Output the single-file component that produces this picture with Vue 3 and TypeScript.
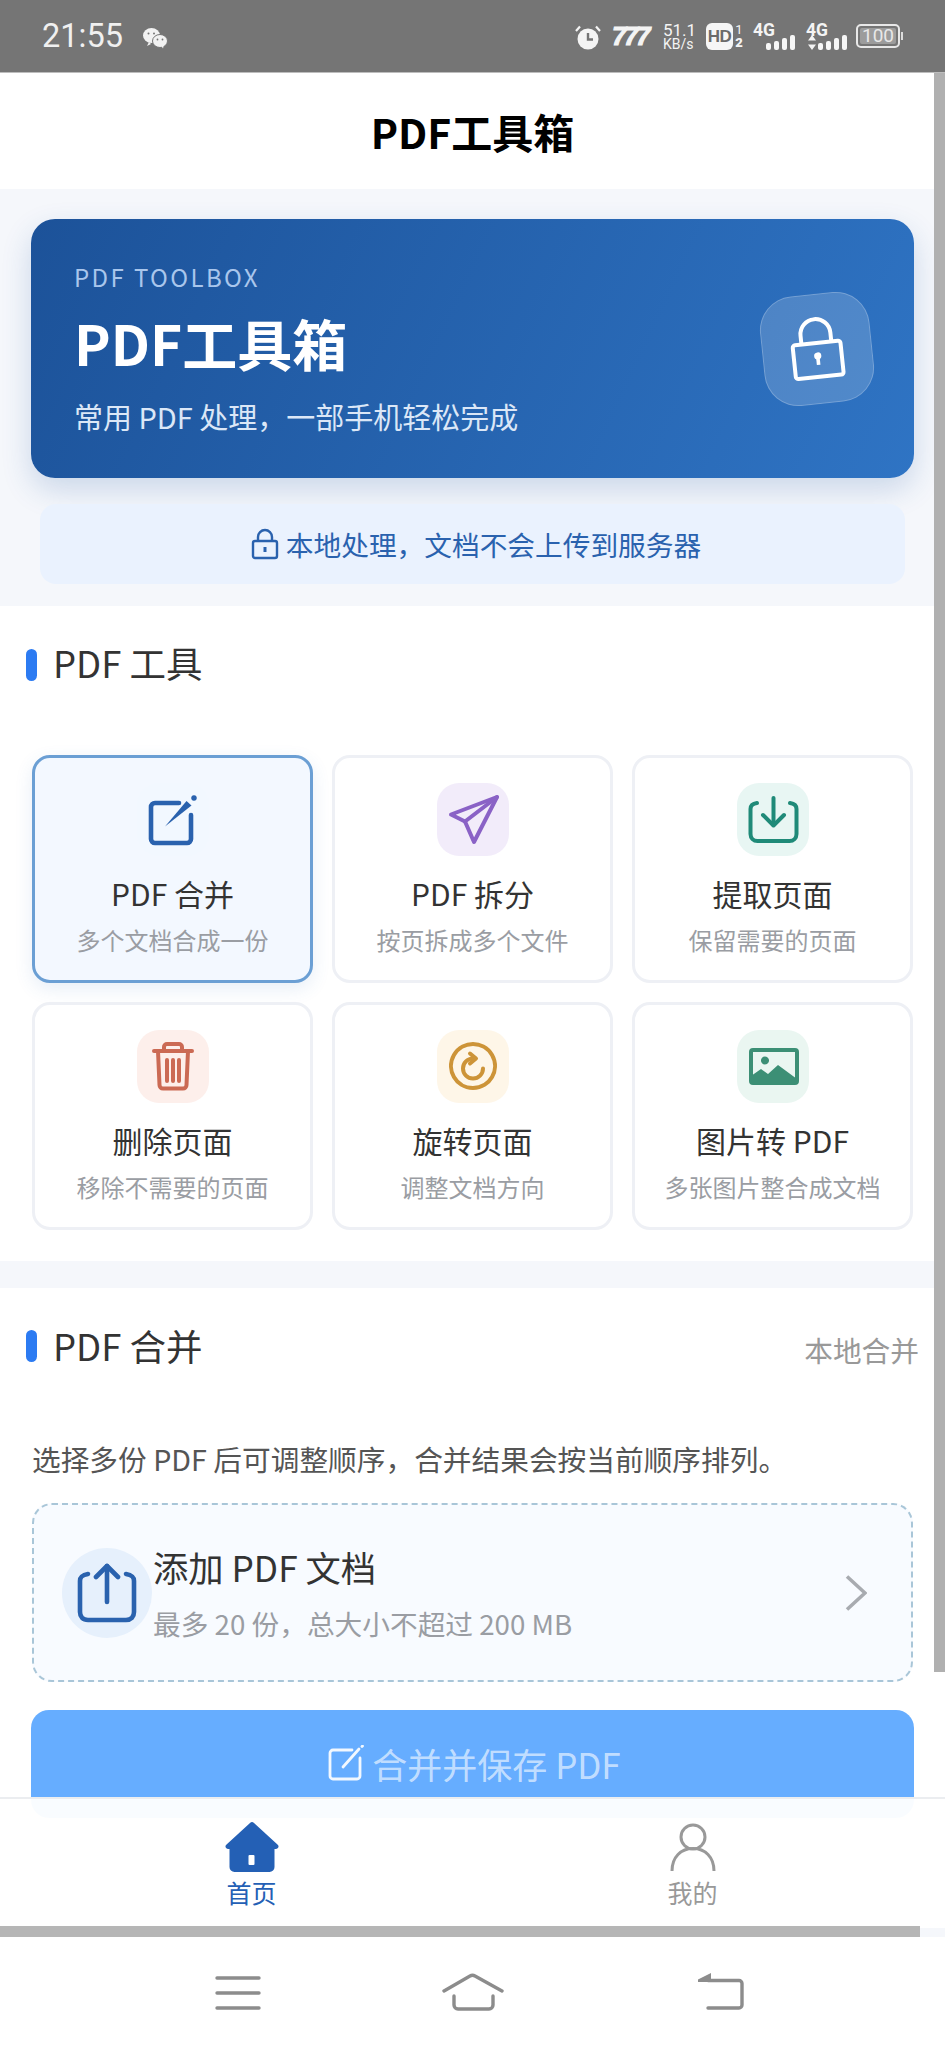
<script setup lang="ts">
interface Shape { d: string; fill?: boolean; width?: number }
interface Tool { title: string; sub: string; bg: string; color: string; active?: boolean; shapes: Shape[] }

const tools: Tool[] = [
  { title: 'PDF 合并', sub: '多个文档合成一份', bg: '#f2f8ff', color: '#2a62ae', active: true, shapes: [
    { d: 'M42 20H18a4 4 0 0 0-4 4v32a4 4 0 0 0 4 4h32a4 4 0 0 0 4-4V32', width: 4.6 },
    { d: 'M28 43.500 49.500 18l5 4.500z', fill: true },
    { d: 'M57 12.200a2.800 2.800 0 1 1-.01 0z', fill: true },
  ] },
  { title: 'PDF 拆分', sub: '按页拆成多个文件', bg: '#f2ecfa', color: '#8a62c6', shapes: [
    { d: 'M60 14 14 31.500l14 7L37 59z' },
    { d: 'M60 14 28 38.500' },
  ] },
  { title: '提取页面', sub: '保留需要的页面', bg: '#e8f6f3', color: '#1f8a78', shapes: [
    { d: 'M20 20c-4 .5-6.500 2.500-6.500 6v25c0 4 3 7 7 7h32c4 0 7-3 7-7V26c0-3.500-2.500-5.500-6.500-6' },
    { d: 'M36.500 15v27' },
    { d: 'M26 32l10.500 10.500L47 32' },
  ] },
  { title: '删除页面', sub: '移除不需要的页面', bg: '#fdefeb', color: '#cb6a54', shapes: [
    { d: 'M17 21h38' },
    { d: 'M27 20v-3a3 3 0 0 1 3-3h12a3 3 0 0 1 3 3v3' },
    { d: 'M21 21l1.500 34a3.500 3.500 0 0 0 3.500 3.500h20a3.500 3.500 0 0 0 3.500-3.500L51 21' },
    { d: 'M30 30v21M36 30v21M42 30v21' },
  ] },
  { title: '旋转页面', sub: '调整文档方向', bg: '#fef6e8', color: '#cd9438', shapes: [
    { d: 'M36 14a22 22 0 1 0 .01 0z' },
    { d: 'M36 28.500a10 10 0 1 0 10 10' },
    { d: 'M33 23.500l6 5-6 5' },
  ] },
  { title: '图片转 PDF', sub: '多张图片整合成文档', bg: '#eaf6f1', color: '#3c8f75', shapes: [
    { d: 'M16 20h42a2 2 0 0 1 2 2v29a2 2 0 0 1-2 2H16a2 2 0 0 1-2-2V22a2 2 0 0 1 2-2z' },
    { d: 'M14 46l10-7 7 5 10-9 19 14v3a2 2 0 0 1-2 2H16a2 2 0 0 1-2-2z', fill: true },
    { d: 'M28 26.500a4 4 0 1 1-.01 0z', fill: true },
  ] },
]
</script>

<template>
  <div class="shell">
    <div class="status">
      <span class="time">21:55</span>
      <svg class="wechat" viewBox="0 0 26 22" width="26" height="22">
        <ellipse cx="9.500" cy="8.500" rx="8.500" ry="7.500" fill="#f2f2f2" />
        <ellipse cx="18" cy="14" rx="7.500" ry="6.500" fill="#f2f2f2" stroke="#757575" stroke-width="1" />
        <path d="M5 19l2-4 2 2zM21 21.500l-2-3 3-1z" fill="#f2f2f2" />
        <circle cx="6.500" cy="6.500" r="1" fill="#757575" /><circle cx="12" cy="6.500" r="1" fill="#757575" />
        <circle cx="15.500" cy="12.500" r=".9" fill="#757575" /><circle cx="20.500" cy="12.500" r=".9" fill="#757575" />
      </svg>
      <span class="status-fill"></span>
      <svg class="alarm" viewBox="0 0 28 26" width="28" height="26">
        <circle cx="14" cy="15" r="10.500" fill="#f4f4f4" />
        <path d="M14 9v6.500h5" fill="none" stroke="#757575" stroke-width="2.400" />
        <path d="M2 7l4-4.500M26 7l-4-4.500" stroke="#f4f4f4" stroke-width="2.200" fill="none" />
      </svg>
      <span class="sevens">777</span>
      <span class="speed"><b>51.1</b><b>KB/s</b></span>
      <span class="hd">HD</span>
      <span class="sims"><b>1</b><b>2</b></span>
      <span class="signal">
        <span class="g4">4G</span>
        <span class="bars"><i class="b1"></i><i class="b2"></i><i class="b3"></i><i class="b4"></i></span>
      </span>
      <span class="signal second">
        <span class="g4">4G</span>
        <span class="bars">
          <svg class="updown" viewBox="0 0 8 15" width="8" height="15"><path d="M4 0l4 5.500H0zM4 15l4-5.500H0z" fill="#f4f4f4" /></svg>
          <i class="b1"></i><i class="b2"></i><i class="b3"></i><i class="b4"></i>
        </span>
      </span>
      <span class="battery"><span class="battery-fill">100</span></span>
      <span class="battery-cap"></span>
    </div>

    <div class="stage">
      <header class="top">PDF工具箱</header>

      <section class="intro">
        <div class="hero">
          <div class="hero-text">
            <div class="eyebrow">PDF TOOLBOX</div>
            <div class="hero-title">PDF工具箱</div>
            <div class="hero-sub">常用 PDF 处理，一部手机轻松完成</div>
          </div>
          <div class="hero-badge">
            <svg viewBox="0 0 60 64" width="60" height="64" fill="none" stroke="#fff" stroke-width="4">
              <rect x="6" y="26" width="48" height="34" rx="2.500" />
              <path d="M15 26V17a15 15 0 0 1 30 0v9" />
              <circle cx="30" cy="39" r="3.600" fill="#fff" stroke="none" />
              <path d="M30 41v7" stroke-width="3.600" />
            </svg>
          </div>
        </div>
        <div class="notice">
          <svg viewBox="0 0 28 32" width="28" height="32" fill="none" stroke="#2a62ae" stroke-width="2.400">
            <rect x="2" y="13" width="24" height="17" rx="2" />
            <path d="M7 13V9a7 7 0 0 1 14 0v4" />
            <path d="M14 19v5" stroke-width="3" />
          </svg>
          <span>本地处理，文档不会上传到服务器</span>
        </div>
      </section>

      <section class="panel tools">
        <div class="heading"><i class="mark"></i><h2>PDF 工具</h2></div>
        <div class="grid">
          <div v-for="t in tools" :key="t.title" class="card" :class="{ active: t.active }">
            <div class="tool-icon" :style="{ background: t.bg }">
              <svg viewBox="0 0 72 72" width="72" height="72" fill="none" :stroke="t.color" stroke-width="4" stroke-linecap="round" stroke-linejoin="round">
                <path v-for="s in t.shapes" :key="s.d" :d="s.d" :fill="s.fill ? t.color : 'none'" :stroke="s.fill ? 'none' : t.color" :stroke-width="s.width ?? 4" />
              </svg>
            </div>
            <div class="card-title">{{ t.title }}</div>
            <div class="card-sub">{{ t.sub }}</div>
          </div>
        </div>
      </section>

      <section class="panel merge">
        <div class="heading spread">
          <i class="mark"></i><h2>PDF 合并</h2>
          <span class="tag">本地合并</span>
        </div>
        <p class="desc">选择多份 PDF 后可调整顺序，合并结果会按当前顺序排列。</p>
        <div class="drop">
          <div class="drop-icon">
            <svg viewBox="0 0 60 60" width="60" height="60" fill="none" stroke="#2a62ae" stroke-width="4.600" stroke-linecap="round" stroke-linejoin="round">
              <path d="M11 11C5 12 3 14 3 18v31c0 5 3 8 8 8h38c5 0 8-3 8-8V18c0-4-2-6-8-7" />
              <path d="M30 39V3" />
              <path d="M19 14 30 3l11 11" />
            </svg>
          </div>
          <div class="drop-text">
            <div class="drop-title">添加 PDF 文档</div>
            <div class="drop-sub">最多 20 份，总大小不超过 200 MB</div>
          </div>
          <svg class="chev" viewBox="0 0 22 36" width="22" height="36" fill="none" stroke="#a8abb0" stroke-width="3.600">
            <path d="M2 1.500 20 18 2 34.500" />
          </svg>
        </div>
        <div class="submit">
          <svg viewBox="0 0 36 36" width="36" height="36" fill="none" stroke="#f2f8ff" stroke-width="2.800" stroke-linecap="round" stroke-linejoin="round">
            <path d="M24 5H5a3 3 0 0 0-3 3v23a3 3 0 0 0 3 3h24a3 3 0 0 0 3-3V13" />
            <path d="M15 22 31 4" />
            <path d="M34 1.500l.5-.5" />
          </svg>
          <span>合并并保存 PDF</span>
        </div>
      </section>

      <nav class="tabs">
        <div class="tab on">
          <svg viewBox="0 0 56 50" width="56" height="50">
            <path d="M26 1a3 3 0 0 1 4 0l24 22a2.500 2.500 0 0 1-2 4h-1.500v18a5 5 0 0 1-5 5h-35a5 5 0 0 1-5-5V27H4a2.500 2.500 0 0 1-2-4z" fill="#2460b5" />
            <rect x="24.500" y="33" width="6" height="10" rx="1" fill="#fff" />
          </svg>
          <span>首页</span>
        </div>
        <div class="tab">
          <svg viewBox="0 0 50 50" width="50" height="50" fill="none" stroke="#999" stroke-width="3">
            <circle cx="25" cy="15" r="12" />
            <path d="M4 49C4 35 13 26.500 25 26.500S46 35 46 49" />
          </svg>
          <span>我的</span>
        </div>
      </nav>

      <div class="scroll-y"></div>
      <div class="scroll-x"></div>
    </div>

    <div class="system">
      <svg viewBox="0 0 46 36" width="46" height="36" fill="none" stroke="#8c8c8c" stroke-width="3.400" stroke-linecap="round">
        <path d="M2 3h42M2 18h42M2 33h42" />
      </svg>
      <svg class="sys-home" viewBox="0 0 62 38" width="62" height="38" fill="none" stroke="#8c8c8c" stroke-width="3.400" stroke-linejoin="round" stroke-linecap="round">
        <path d="M2 18 28 3a5 5 0 0 1 5 0l27 15" />
        <path d="M12 23v9a4 4 0 0 0 4 4h31a4 4 0 0 0 4-4V23" />
      </svg>
      <svg class="sys-back" viewBox="0 0 46 38" width="46" height="38" fill="none" stroke="#8c8c8c" stroke-width="3.400" stroke-linecap="round">
        <path d="M10 7.500h31a3 3 0 0 1 3 3V32a3 3 0 0 1-3 3H10" />
        <path d="M0 6.500 13 0v9H0z" fill="#8c8c8c" stroke="none" />
      </svg>
    </div>
  </div>
</template>

<style scoped>
.shell {
  width: 945px;
  height: 2048px;
  display: flex;
  flex-direction: column;
  overflow: hidden;
  background: #fff;
  font-family: "Noto Sans CJK SC", "Noto Sans", sans-serif;
  color: #333;
}
.status {
  height: 73px;
  box-sizing: border-box;
  flex: none;
  background: #757575;
  border-bottom: 1px solid #bdbdbd;
  display: flex;
  align-items: center;
  color: #f4f4f4;
  padding: 0 42px 0 42px;
}
.time { font: 400 32.500px/1 Roboto, sans-serif; color: #f0f0f0; }
.wechat { margin-left: 19px; margin-top: 3px; }
.status-fill { flex: 1; }
.alarm { flex: none; margin-top: 2px; }
.sevens {
  flex: none;
  margin-left: 10px;
  width: 38px;
  font: italic 700 26px/30px "Liberation Sans", sans-serif;
  letter-spacing: -2.500px;
  -webkit-text-stroke: 1px #f4f4f4;
  white-space: nowrap;
}
.speed { flex: none; display: flex; flex-direction: column; margin-left: 13px; width: 30px; font: 400 14px/14px Roboto, sans-serif; margin-top: 3px; }
.speed b { font-weight: 400; white-space: nowrap; }
.speed b:first-child { font-size: 17px; line-height: 13px; }
.hd {
  flex: none;
  margin-left: 13px;
  width: 27px;
  height: 27px;
  border-radius: 6px;
  background: #f6f6f6;
  color: #6b6b6b;
  font: 700 17px/27px "Liberation Sans", sans-serif;
  letter-spacing: -.5px;
  text-align: center;
}
.sims { flex: none; display: flex; flex-direction: column; margin-left: 2px; width: 8px; font: 700 13px/13px Roboto, sans-serif; text-align: center; }
.sims b:first-child { font-weight: 400; }
.signal { flex: none; margin-left: 10px; width: 42px; height: 27px; position: relative; }
.signal.second { margin-left: 11px; width: 41px; }
.g4 { position: absolute; left: 0; top: 0; font: 700 17.500px/15px Roboto, sans-serif; }
.bars { position: absolute; right: 0; bottom: 0; display: flex; align-items: flex-end; gap: 3px; }
.bars i { width: 5px; background: #f6f6f6; border-radius: 2px; display: block; }
.b1 { height: 7px; }
.b2 { height: 9px; }
.b3 { height: 12px; }
.b4 { height: 15px; }
.updown { margin-right: -1px; }
.battery {
  flex: none;
  margin-left: 9px;
  width: 44px;
  height: 24px;
  border: 2px solid #e8e8e8;
  border-radius: 5px;
  padding: 2px;
  box-sizing: border-box;
  display: block;
}
.battery-fill {
  display: block;
  height: 16px;
  background: #9c9c9c;
  border-radius: 2px;
  font: 400 19px/16px Roboto, sans-serif;
  text-align: center;
  color: #e8e8e8;
}
.battery-cap { flex: none; width: 2px; height: 8px; margin-left: 1px; background: #dcdcdc; }
.stage { height: 1864px; flex: none; position: relative; overflow: hidden; background: #f5f7fb; }
.top {
  height: 116px;
  display: flex;
  align-items: center;
  justify-content: center;
  font-size: 41px;
  font-weight: 700;
  color: #000;
  background: #fff;
}
.intro { background: #f5f7fb; padding: 30px 31px 22px; }
.hero {
  height: 259px;
  box-sizing: border-box;
  border-radius: 24px;
  background: linear-gradient(115deg, #1c5299 0%, #2f74c4 100%);
  box-shadow: 0 12px 30px rgba(34, 90, 165, .2);
  padding: 42px 42px 0 43px;
  display: flex;
  align-items: flex-start;
  justify-content: space-between;
  color: #fff;
}
.eyebrow { font-size: 24px; line-height: 32px; letter-spacing: 2.400px; color: #a9c6ec; }
.hero-title { font-size: 55px; font-weight: 700; line-height: 68px; margin-top: 15px; }
.hero-sub { font-size: 29px; line-height: 40px; margin-top: 20px; color: #dbe7f7; white-space: nowrap; }
.hero-badge {
  width: 110px;
  height: 110px;
  margin-top: 33px;
  border-radius: 34px;
  border: 1px solid rgba(255, 255, 255, .22);
  background: rgba(255, 255, 255, .17);
  transform: rotate(-6deg);
  display: flex;
  align-items: center;
  justify-content: center;
  box-sizing: border-box;
}
.notice {
  margin: 26px 9px 0;
  height: 80px;
  padding-left: 7px;
  background: #eaf2fe;
  border-radius: 16px;
  display: flex;
  align-items: center;
  justify-content: center;
  gap: 7px;
  font-size: 27.700px;
  color: #2a62ae;
}
.panel { background: #fff; padding: 0 31px; }
.tools { height: 655px; box-sizing: border-box; }
.heading {
  display: flex;
  align-items: center;
  height: 50px;
  margin-left: -5px;
}
.tools .heading { padding-top: 34px; }
.merge .heading { padding-top: 33px; }
.mark { width: 11px; height: 32px; background: #2c7bf2; border-radius: 6px; display: block; }
h2 { margin: -4px 0 0 16px; font-size: 36.500px; font-weight: 400; color: #333; line-height: 50px; }
.merge h2 { margin-top: 0; }
.spread .tag { margin-left: auto; margin-right: -5px; font-size: 28.700px; color: #999; padding-top: 6px; }
.grid {
  margin: 65px 1px 0;
  display: grid;
  grid-template-columns: repeat(3, 281px);
  column-gap: 19px;
  row-gap: 19px;
}
.card {
  height: 228px;
  box-sizing: border-box;
  border: 3px solid #eef0f5;
  border-radius: 18px;
  padding-top: 25px;
  background: #fff;
  display: flex;
  flex-direction: column;
  align-items: center;
}
.card.active {
  background: #f3f8ff;
  border-color: #6b9fd4;
  box-shadow: 0 6px 18px rgba(60, 115, 190, .12);
}
.tool-icon { width: 72px; height: 73px; border-radius: 22px; flex: none; }
.card-title { margin-top: 15px; font-size: 30px; line-height: 44px; color: #333; white-space: nowrap; }
.card-sub { margin-top: 8px; font-size: 24px; line-height: 34px; color: #9a9da3; white-space: nowrap; }
.merge { height: 640px; box-sizing: border-box; margin-top: 27px; }
.desc { margin: 68px 1px 0; font-size: 28.700px; line-height: 40px; color: #555; white-space: nowrap; }
.drop {
  margin: 24px 1px 0;
  height: 179px;
  box-sizing: border-box;
  border: 2px dashed #a9c6d8;
  border-radius: 20px;
  background: #f8fbff;
  display: flex;
  align-items: center;
  padding: 0 44px 0 28px;
}
.drop-icon {
  width: 90px;
  height: 90px;
  border-radius: 50%;
  background: #e6f0fc;
  display: flex;
  align-items: center;
  justify-content: center;
  flex: none;
}
.drop-text { flex: 1; margin-left: 1px; }
.drop-title { font-size: 35.300px; line-height: 46px; color: #333; white-space: nowrap; }
.drop-sub { margin-top: 15px; font-size: 27.700px; line-height: 36px; color: #9a9da3; white-space: nowrap; }
.submit {
  margin-top: 28px;
  height: 108px;
  padding: 0 0 2px 4px;
  box-sizing: border-box;
  background: #66adff;
  border-radius: 18px;
  display: flex;
  align-items: center;
  justify-content: center;
  gap: 8px;
  font-size: 35px;
}
.submit span { color: rgba(255, 255, 255, .62); }
.tabs {
  position: absolute;
  left: 0;
  right: 0;
  bottom: 11px;
  height: 129px;
  box-sizing: border-box;
  border-top: 2px solid #ebedf0;
  background: rgba(255, 255, 255, .965);
  padding: 23px 31px 0;
  display: grid;
  grid-template-columns: 441px 441px;
}
.tab { display: flex; flex-direction: column; align-items: center; font-size: 25px; line-height: 34px; color: #999; }
.tab svg { flex: none; margin-bottom: 3px; }
.tab.on { color: #2460b5; }
.scroll-y { position: absolute; top: 0; right: 0; width: 11px; height: 1599px; background: #b0b0b0; }
.scroll-x { position: absolute; left: 0; right: 25px; bottom: 0; height: 11px; background: #b6b6b6; }
.system {
  height: 111px;
  flex: none;
  box-sizing: border-box;
  display: flex;
  align-items: flex-start;
  padding: 38px 0 0 215px;
  background: #fff;
}
.sys-home { margin: -2px 0 0 181px; }
.sys-back { margin: -2px 0 0 194px; }
</style>
